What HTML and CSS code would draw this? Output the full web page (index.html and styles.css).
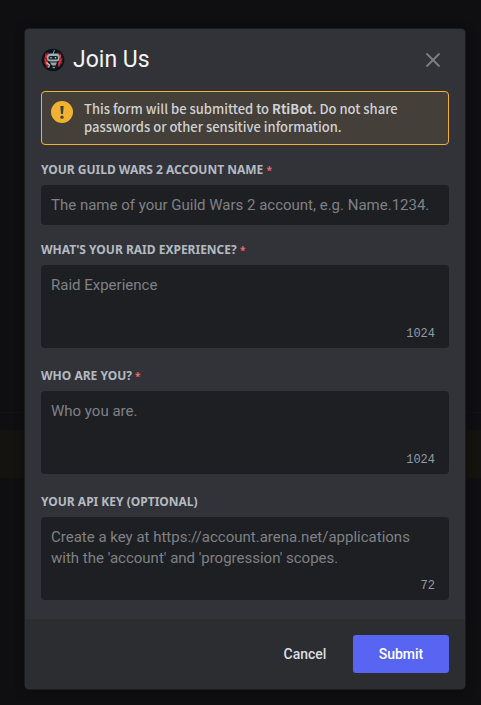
FILE: index.html
```html
<!DOCTYPE html>
<html lang="en">
<head>
<meta charset="utf-8">
<meta name="viewport" content="width=device-width, initial-scale=1">
<title>Join Us</title>
<link rel="stylesheet" href="styles.css">
</head>
<body>
<main class="layer">
  <div class="chat" aria-hidden="true">
    <div class="chat-divider"></div>
    <div class="chat-mention"></div>
  </div>
  <form class="modal" role="dialog" aria-labelledby="modal-title">
    <div class="modal-body">
      <header class="modal-header">
        <svg class="avatar" viewBox="0 0 24 24" aria-hidden="true">
          <circle cx="12" cy="12" r="11.300" fill="#08131d"/>
          <path d="M4 5.500 6 5 7 4 8.500 6H15.500L17 4 18 5.500 20 5.500 20 9 22 11 20.500 13 21.500 15 19.500 16.500 19 19 16 18.500 14 21H10L8.500 19.500 5.500 20 5 17 3 15.500 4 12.500 2.500 10 4.500 9Z" fill="#8e2226"/>
          <path d="M4 11.500 6.500 17.500M20 11.500 17.500 17M4.500 7.500 6 10M19.500 7 18.500 10" stroke="#dd3639" stroke-width="1.800"/>
          <path d="M12 6 13.500 2" stroke="#8ba0ac" stroke-width="1"/>
          <path d="M7 13H17.500L16.500 18.500 14.500 22H9.500L7.500 18Z" fill="#0e1820"/>
          <rect x="6" y="5.500" width="12.500" height="8" rx="3.500" fill="#9eacb3"/>
          <rect x="7.500" y="8" width="9.500" height="3.500" rx="1.500" fill="#14202a"/>
          <circle cx="10" cy="9.700" r=".8" fill="#cbd5da"/>
          <circle cx="14.500" cy="9.700" r=".8" fill="#cbd5da"/>
          <path d="M9 14.500H16L14.500 17.500H11Z" fill="#98a5ac"/>
          <path d="M11.500 19.500H14" stroke="#78868f" stroke-width="1.500"/>
          <path d="M5.500 14.500 8.500 17 7.500 19.500" fill="none" stroke="#d9c4c5" stroke-width="1.200"/>
        </svg>
        <h1 class="title" id="modal-title">Join Us</h1>
        <button class="close" type="button" aria-label="Close">
          <svg class="close-icon" viewBox="0 0 16 16" aria-hidden="true"><path d="M1.500 1.500 14.500 14.500M14.500 1.500 1.500 14.500" stroke="currentColor" stroke-width="1.800"/></svg>
        </button>
      </header>
      <div class="notice">
        <svg class="notice-icon" viewBox="0 0 22 22" aria-hidden="true">
          <circle cx="11" cy="11" r="11" fill="#f0b232"/>
          <path d="M9.300 5H12.700L12 13H10Z" fill="#453f36"/>
          <circle cx="11" cy="16.200" r="1.600" fill="#453f36"/>
        </svg>
        <p class="notice-text">This form will be submitted to <strong>RtiBot.</strong> Do not share passwords or other sensitive information.</p>
      </div>
      <div class="field">
        <label class="label" for="account">Your Guild Wars 2 Account Name <span class="required">*</span></label>
        <input class="control" id="account" type="text" placeholder="The name of your Guild Wars 2 account, e.g. Name.1234." required>
      </div>
      <div class="field">
        <label class="label" for="raid">What's your raid experience? <span class="required">*</span></label>
        <div class="area"><textarea class="control" id="raid" placeholder="Raid Experience" maxlength="1024" required></textarea><span class="count">1024</span></div>
      </div>
      <div class="field field-spaced">
        <label class="label" for="who">Who are you? <span class="required">*</span></label>
        <div class="area"><textarea class="control" id="who" placeholder="Who you are." maxlength="1024" required></textarea><span class="count">1024</span></div>
      </div>
      <div class="field field-spaced">
        <label class="label" for="key">Your API key (optional)</label>
        <div class="area"><textarea class="control" id="key" placeholder="Create a key at https://account.arena.net/applications with the 'account' and 'progression' scopes." maxlength="72"></textarea><span class="count">72</span></div>
      </div>
    </div>
    <footer class="modal-footer">
      <button class="button" type="button">Cancel</button>
      <button class="button button-primary" type="submit">Submit</button>
    </footer>
  </form>
</main>
</body>
</html>
```
FILE: styles.css
```css
* {
  box-sizing: border-box;
}

body {
  margin: 0;
  background: #0f0f11;
  color: #dbdee1;
  font-family: Roboto, "Noto Sans", sans-serif;
}

.layer {
  display: grid;
  min-height: 100vh;
}

.chat,
.modal {
  grid-area: 1 / 1;
}

.chat {
  padding-top: 412px;
}

.chat-divider {
  height: 1px;
  margin-bottom: 17px;
  background: #131315;
}

.chat-mention {
  height: 48px;
  background: #15130f;
}

.modal {
  align-self: start;
  justify-self: center;
  width: calc(100% - 41px);
  max-width: 440px;
  margin: 29px 16px 16px 25px;
  border-radius: 4px;
  background: #313338;
  box-shadow: 0 0 0 1px #1b1c1e, 0 2px 10px #0b0b0c;
  overflow: hidden;
}

.modal-body {
  padding: 16px 16px 19px;
}

.modal-header {
  display: flex;
  align-items: center;
  gap: 8px;
  height: 30px;
  margin-bottom: 16px;
}

.avatar {
  width: 24px;
  height: 24px;
}

.title {
  flex: 1;
  margin: 0;
  color: #f2f3f5;
  font-size: 23px;
  font-weight: 400;
  line-height: 30px;
}

.close {
  display: grid;
  place-items: center;
  width: 32px;
  height: 32px;
  padding: 0;
  border: 0;
  background: none;
  color: #7c7f85;
}

.close-icon {
  width: 16px;
  height: 16px;
}

.notice {
  display: flex;
  gap: 11px;
  padding: 8px 9px;
  border: 1px solid #f0b232;
  border-radius: 4px;
  background: #443f38;
}

.notice-icon {
  flex: none;
  width: 22px;
  height: 22px;
  margin-top: 1px;
}

.notice-text {
  margin: 0;
  color: #cfd1d3;
  font-family: "Noto Sans CJK JP", sans-serif;
  font-size: 13px;
  font-weight: 500;
  line-height: 18px;
}

.notice-text strong {
  font-weight: 700;
}

.field {
  display: flex;
  flex-direction: column;
  gap: 6px;
  margin-top: 16px;
}

.field-spaced {
  margin-top: 19px;
}

.label {
  color: #b5bac1;
  font-family: "Noto Sans", sans-serif;
  font-size: 12px;
  font-weight: 700;
  line-height: 18px;
  text-transform: uppercase;
}

.required {
  color: #f2666b;
  font-size: 10px;
}

.area {
  display: grid;
  height: 83px;
}

.control {
  width: 100%;
  height: 40px;
  padding: 10px;
  border: 0;
  border-radius: 4px;
  background: #1e1f22;
  color: #dbdee1;
  font-family: inherit;
  font-size: 15px;
  line-height: 21px;
  resize: none;
}

.control::placeholder {
  color: #7f8186;
  opacity: 1;
}

.area .control {
  grid-area: 1 / 1;
  height: 100%;
  overflow: hidden;
}

.count {
  grid-area: 1 / 1;
  place-self: end;
  padding: 0 14px 7px 0;
  color: #949ba4;
  font-family: "Liberation Mono", monospace;
  font-size: 12px;
  line-height: 14px;
  pointer-events: none;
}

.modal-footer {
  display: flex;
  justify-content: flex-end;
  padding: 16px;
  background: #2b2d31;
}

.button {
  min-width: 96px;
  height: 38px;
  padding: 0 16px;
  border: 0;
  border-radius: 3px;
  background: none;
  color: #dbdee1;
  font-family: Roboto, sans-serif;
  font-size: 14px;
  font-weight: 500;
}

.button-primary {
  background: #5865f2;
  color: #ffffff;
}
```
